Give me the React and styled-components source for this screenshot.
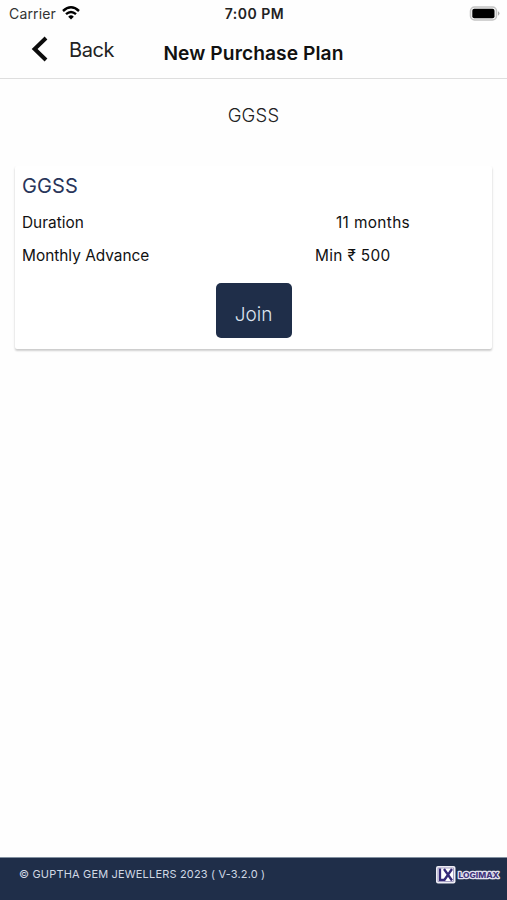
import React from 'react';
import styled, { createGlobalStyle } from 'styled-components';

const GlobalStyle = createGlobalStyle`
  * {
    box-sizing: border-box;
  }

  body {
    margin: 0;
    background: #fefefe;
    color: #111;
    font-family: Inter, 'Liberation Sans', sans-serif;
  }
`;

const Screen = styled.div`
  display: flex;
  flex-direction: column;
  height: 900px;
  overflow: hidden;
`;

const StatusBar = styled.header`
  display: grid;
  grid-template-columns: 1fr auto 1fr;
  align-items: center;
  height: 27px;
  padding: 0 7px 0 9px;
`;

const Carrier = styled.div`
  display: flex;
  align-items: center;
  gap: 6px;
  font-size: 14px;
  letter-spacing: 0.15px;
  color: #333;

  svg {
    margin-top: -2px;
  }
`;

const Clock = styled.div`
  font-size: 14px;
  font-weight: 600;
  letter-spacing: 0.5px;
  color: #222;
`;

const BatteryIcon = styled.svg`
  justify-self: end;
`;

const NavBar = styled.nav`
  display: grid;
  grid-template-columns: 1fr auto 1fr;
  align-items: center;
  height: 52px;
  border-bottom: 1px solid #dedede;
`;

const BackButton = styled.button`
  display: flex;
  align-items: center;
  gap: 20px;
  padding: 0 0 7px 31px;
  border: 0;
  background: none;
  font: inherit;
  font-size: 20px;
  letter-spacing: -0.4px;
  color: #222;
`;

const BackLabel = styled.span`
  padding-top: 2px;
`;

const Title = styled.h1`
  margin: 0;
  font-size: 19.2px;
  font-weight: 600;
  letter-spacing: 0.08px;
  color: #111;
`;

const Content = styled.main`
  flex: 1;
`;

const PlanName = styled.h2`
  margin: 25px 0 39px;
  font-size: 18.5px;
  line-height: 23px;
  font-weight: 300;
  letter-spacing: 0.2px;
  text-align: center;
  color: #222;
`;

const Card = styled.section`
  height: 183px;
  margin: 0 15px;
  padding: 8px 7px 0;
  border-radius: 2px;
  background: #fff;
  box-shadow: 0 2px 2px rgba(0, 0, 0, 0.14), 0 1px 3px rgba(0, 0, 0, 0.1);
  clip-path: inset(0 -4px -6px -4px);
`;

const CardTitle = styled.h3`
  margin: 0 0 8px;
  font-size: 20px;
  line-height: 24px;
  font-weight: 400;
  letter-spacing: 0.1px;
  color: #29355a;
`;

const Row = styled.div`
  display: flex;
  height: 33px;
  font-size: 15.4px;
  line-height: 33px;
`;

const Label = styled.div`
  width: ${({ $width }) => $width}px;
`;

const Value = styled.div`
  letter-spacing: 0.35px;
  white-space: nowrap;
`;

const JoinButton = styled.button`
  display: block;
  width: 76px;
  height: 55px;
  margin: 11px auto 0;
  padding: 7px 0 0;
  border: 0;
  border-radius: 5px;
  background: #1f2e49;
  color: #dbe3ef;
  font: inherit;
  font-size: 19px;
  font-weight: 300;
`;

const Footer = styled.footer`
  display: flex;
  justify-content: space-between;
  height: 43px;
  padding: 7px 6px 0 19px;
  border-top: 1px solid #8290a0;
  background: #1f2e49;
`;

const Copyright = styled.div`
  padding-top: 1px;
  font-size: 11px;
  line-height: 17px;
  letter-spacing: 0.17px;
  color: #d0d8e4;
`;

const WifiIcon = () => (
  <svg width="18" height="14" viewBox="0 0 18 14" fill="none" stroke="#000" strokeWidth="2.4">
    <path d="M1 5Q9-2.4 17 5" />
    <path d="M4 8.2Q9 3.7 14 8.2" />
    <path d="M6.2 10.7Q9 8 11.8 10.7L9 13.5Z" fill="#000" stroke="none" />
  </svg>
);

const BackIcon = () => (
  <svg width="18" height="26" viewBox="0 0 18 26" fill="none" stroke="#0c0c0c" strokeWidth="4">
    <path d="M15 2L3.6 13L15 24" />
  </svg>
);

const LogimaxLogo = () => (
  <svg width="66" height="20" viewBox="0 0 66 20">
    <rect x="1" y="1" width="19.5" height="17.5" rx="2" fill="#eeedf5" />
    <rect x="3" y="3" width="15.5" height="13.5" fill="#fff" stroke="#6b659c" strokeWidth="0.6" />
    <path d="M5 3.5V14.8H10" fill="none" stroke="#352a78" strokeWidth="2.3" />
    <path d="M9 4L17 15.5M17 4L9 15.5" fill="none" stroke="#352a78" strokeWidth="2.3" />
    <text
      x="23.5"
      y="12.5"
      textLength="40.5"
      lengthAdjust="spacingAndGlyphs"
      fontFamily="Inter, sans-serif"
      fontSize="7.5"
      fontWeight="800"
      fill="#40357c"
      stroke="#e2e1ef"
      strokeWidth="2.4"
      strokeLinejoin="round"
      paintOrder="stroke"
    >
      LOGIMAX
    </text>
  </svg>
);

const rows = [
  { label: 'Duration', value: '11 months', width: 314 },
  { label: 'Monthly Advance', value: 'Min ₹ 500', width: 293 },
];

const App = () => {
  return (
    <Screen>
      <GlobalStyle />
      <StatusBar>
        <Carrier>
          Carrier
          <WifiIcon />
        </Carrier>
        <Clock>7:00 PM</Clock>
        <BatteryIcon width="31" height="15" viewBox="0 0 31 15">
          <rect x="1.5" y="1" width="26" height="13" rx="4" fill="#f5f5f5" stroke="#c4c4c4" strokeWidth="1.5" />
          <rect x="3.3" y="2.8" width="22.2" height="9.4" rx="2" fill="#000" />
          <path d="M29 5.3Q32 7.5 29 9.7Z" fill="#aaa" />
        </BatteryIcon>
      </StatusBar>

      <NavBar>
        <BackButton>
          <BackIcon />
          <BackLabel>Back</BackLabel>
        </BackButton>
        <Title>New Purchase Plan</Title>
      </NavBar>

      <Content>
        <PlanName>GGSS</PlanName>
        <Card>
          <CardTitle>GGSS</CardTitle>
          {rows.map((row) => (
            <Row key={row.label}>
              <Label $width={row.width}>{row.label}</Label>
              <Value>{row.value}</Value>
            </Row>
          ))}
          <JoinButton>Join</JoinButton>
        </Card>
      </Content>

      <Footer>
        <Copyright>© GUPTHA GEM JEWELLERS 2023 ( V-3.2.0 )</Copyright>
        <LogimaxLogo />
      </Footer>
    </Screen>
  );
};

export default App;
